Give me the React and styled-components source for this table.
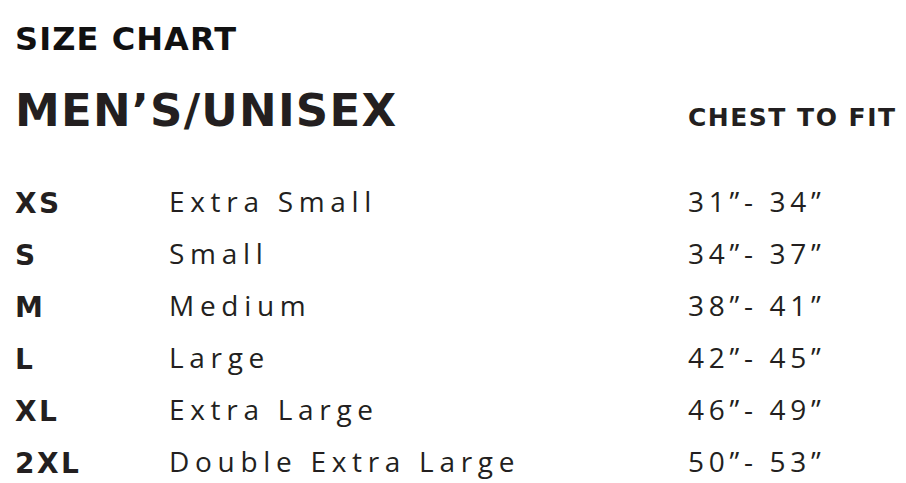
import React from "react";
import styled, { createGlobalStyle } from "styled-components";

const sizes = [
    { code: "XS", name: "Extra Small", chest: "31”- 34”" },
    { code: "S", name: "Small", chest: "34”- 37”" },
    { code: "M", name: "Medium", chest: "38”- 41”" },
    { code: "L", name: "Large", chest: "42”- 45”" },
    { code: "XL", name: "Extra Large", chest: "46”- 49”" },
    { code: "2XL", name: "Double Extra Large", chest: "50”- 53”" },
];

export default function App() {
    return (
        <>
            <GlobalStyle />
            <Chart>
                <Title>SIZE CHART</Title>
                <HeadRow>
                    <Group>MEN’S/UNISEX</Group>
                    <ColHead>CHEST TO FIT</ColHead>
                </HeadRow>
                <Table>
                    {sizes.map((s) => (
                        <React.Fragment key={s.code}>
                            <Code>{s.code}</Code>
                            <Name>{s.name}</Name>
                            <Chest>{s.chest}</Chest>
                        </React.Fragment>
                    ))}
                </Table>
            </Chart>
        </>
    );
}

const GlobalStyle = createGlobalStyle`
    body {
        margin: 0;
        background: #fff;
        font-family: "Open Sans", Lato, sans-serif;
        color: #231f20;
    }
`;

const bold = `"DejaVu Sans", "Open Sans", sans-serif`;

const Chart = styled.div`
    padding: 19px 0 0 15px;
    width: 906px;
    box-sizing: border-box;
`;

const Title = styled.h1`
    margin: 0;
    font-family: ${bold};
    font-size: 32px;
    line-height: 40px;
    font-weight: 700;
    letter-spacing: 1.1px;
    color: #111;
`;

const HeadRow = styled.div`
    display: flex;
    align-items: baseline;
    margin-top: 27px;
`;

const Group = styled.h2`
    margin: 0;
    width: 673px;
    font-family: ${bold};
    font-size: 45px;
    line-height: 50px;
    font-weight: 700;
    letter-spacing: 1.2px;
`;

const ColHead = styled.div`
    font-family: ${bold};
    font-size: 25px;
    font-weight: 700;
    letter-spacing: 1.5px;
    white-space: nowrap;
`;

const Table = styled.div`
    display: grid;
    grid-template-columns: 154px 519px 1fr;
    grid-auto-rows: 52px;
    align-items: center;
    margin-top: 39px;
`;

const Code = styled.div`
    padding-top: 4px;
    font-family: ${bold};
    font-size: 28px;
    font-weight: 700;
    letter-spacing: 2.5px;
`;

const Name = styled.div`
    font-size: 28px;
    font-weight: 400;
    letter-spacing: 5.7px;
    white-space: nowrap;
`;

const Chest = styled.div`
    font-size: 28px;
    font-weight: 400;
    letter-spacing: 4.7px;
    white-space: nowrap;
`;
